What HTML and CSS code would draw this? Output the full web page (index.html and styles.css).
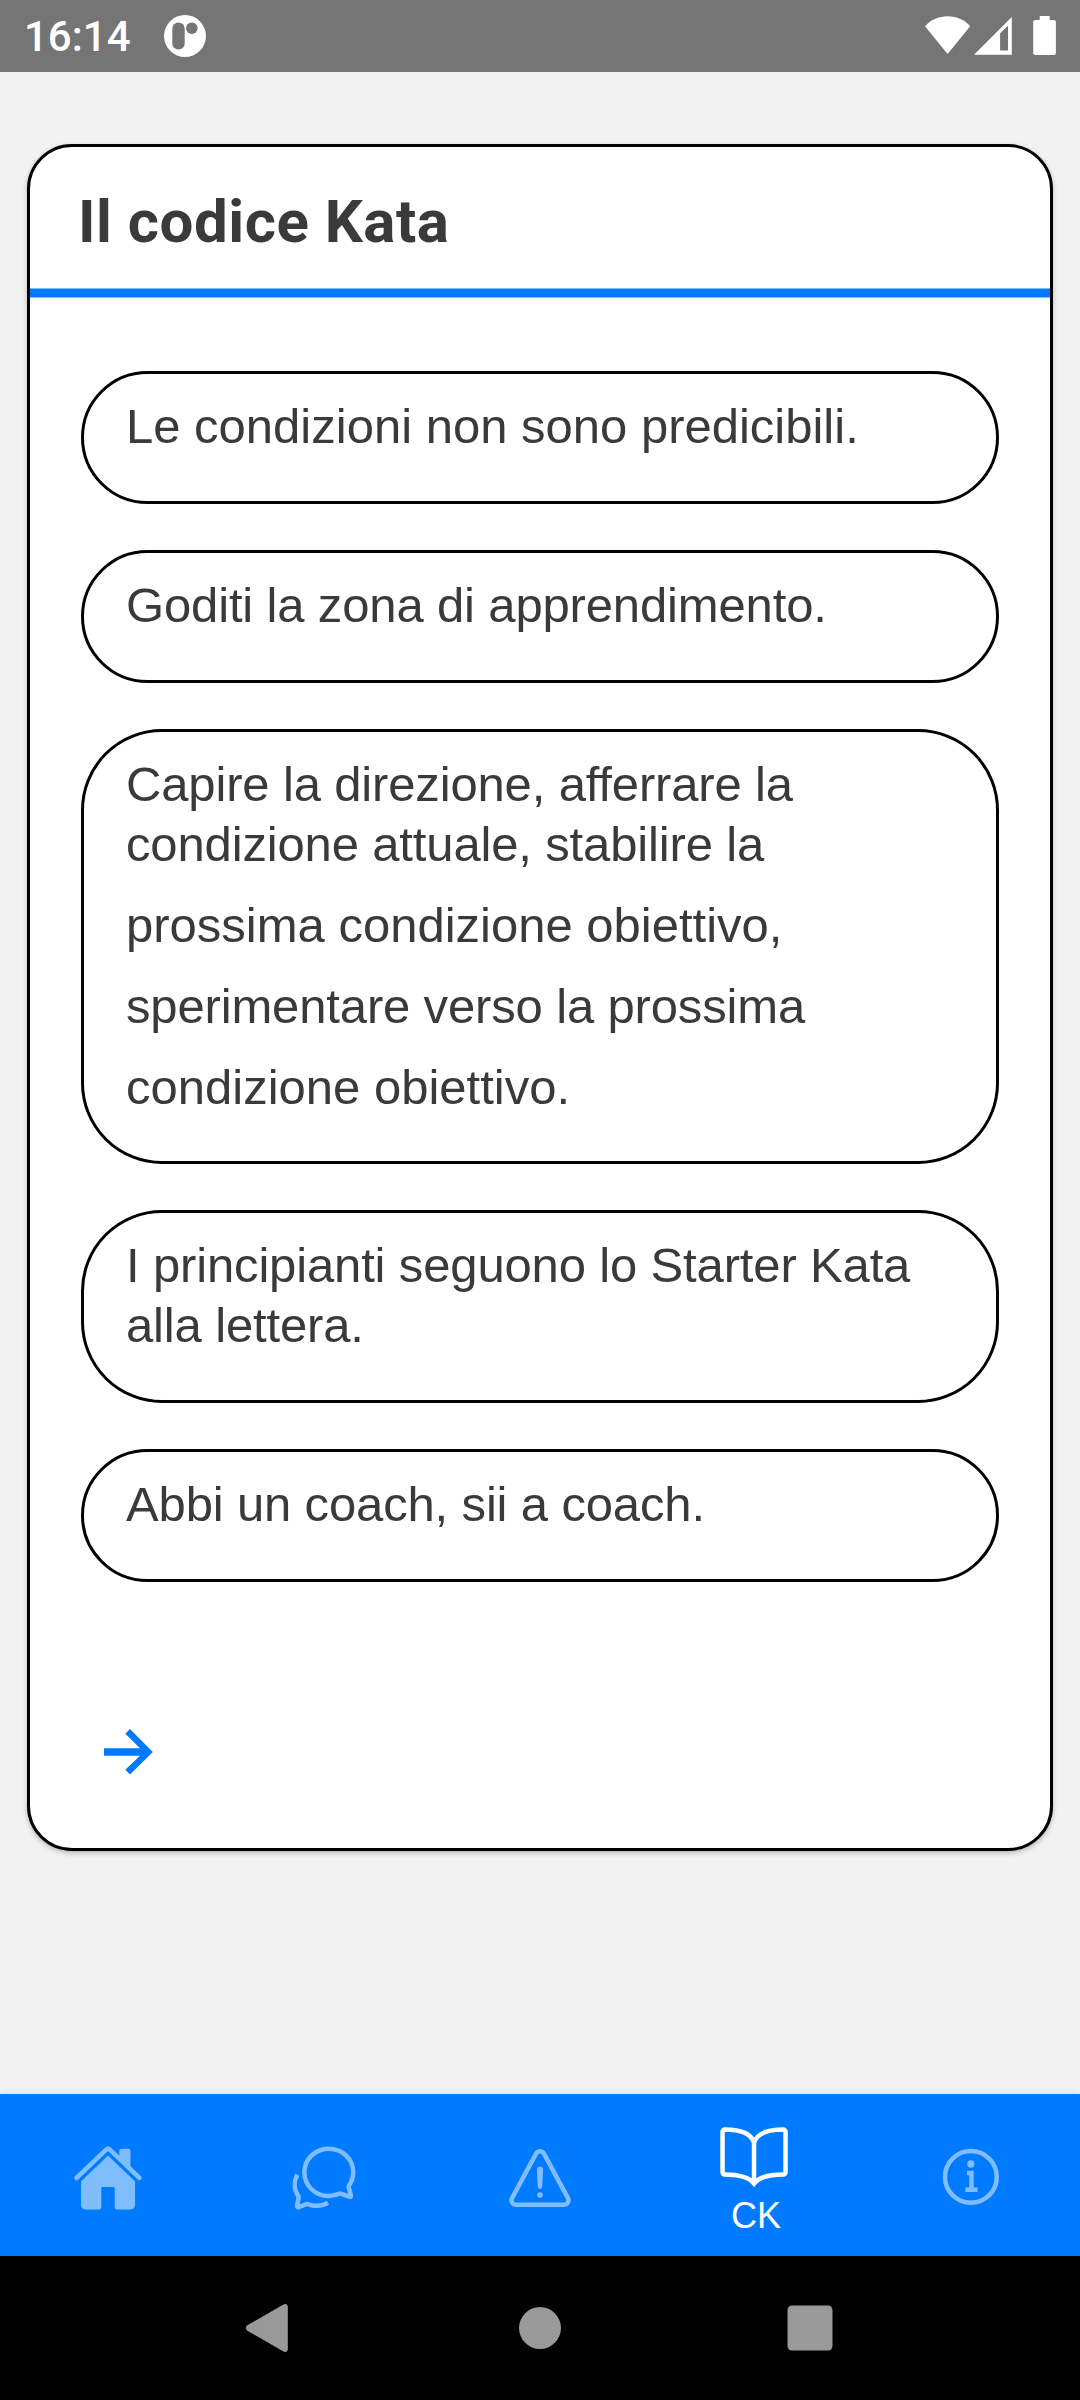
FILE: index.html
```html
<!DOCTYPE html>
<html lang="it">
<head>
  <meta charset="utf-8">
  <title>Il codice Kata</title>
  <link rel="stylesheet" href="styles.css">
</head>
<body>
  <header class="status">
    <span class="status__time">16:14</span>
    <svg class="status__app" width="42" height="42" viewBox="0 0 42 42">
      <circle cx="21" cy="21" r="21" fill="#fff"/>
      <rect x="8.3" y="7.4" width="12.4" height="27.2" rx="6.2" fill="#757575"/>
      <circle cx="27.8" cy="13.2" r="5.8" fill="#757575"/>
    </svg>
    <svg class="status__system" width="132" height="40" viewBox="0 0 132 40">
      <path fill="#fff" d="M23.6 38 1 10.3C6.500 4 14.500.3 23.600.3S40.700 4 46.200 10.300z"/>
      <path fill="#fff" fill-rule="evenodd" d="M50 38.700 87.800 1v37.700zM76.100 17.300V34.500H84V9.700z"/>
      <path fill="#fff" d="M115.700 0h10v4h4.200a2 2 0 0 1 2 2v31a2 2 0 0 1-2 2h-18.700a2 2 0 0 1-2-2V6a2 2 0 0 1 2-2h4.500z"/>
    </svg>
  </header>

  <main class="screen">
    <section class="card">
      <h1 class="card__title">Il codice Kata</h1>
      <ul class="rules">
        <li class="rule">Le condizioni non sono predicibili.</li>
        <li class="rule snug">Goditi la zona di apprendimento.</li>
        <li class="rule snug">Capire la direzione, afferrare la<br>condizione attuale, stabilire la
          <p class="rule__more">prossima condizione obiettivo,<br><span class="snug">sperimentare verso la prossima</span><br>condizione obiettivo.</p>
        </li>
        <li class="rule snug">I principianti seguono lo Starter Kata<br>alla lettera.</li>
        <li class="rule snug">Abbi un coach, sii a coach.</li>
      </ul>
      <svg class="card__next" width="49" height="46" viewBox="0 0 49 46">
        <path fill="#007aff" d="M0 19.300h36L21.300 4.700 26 0l22.800 23L26 45.500l-4.700-4.700L36 26.700H0z"/>
      </svg>
    </section>
  </main>

  <nav class="tabs">
    <a class="tab">
      <svg class="icon" viewBox="0 0 512 512">
        <path class="solid" d="M261.560 101.280a8 8 0 0 0-11.060 0L66.400 277.150a8 8 0 0 0-2.470 5.790L63.900 448a32 32 0 0 0 32 32H192a16 16 0 0 0 16-16V328a8 8 0 0 1 8-8h80a8 8 0 0 1 8 8v136a16 16 0 0 0 16 16h96.060a32 32 0 0 0 32-32V282.940a8 8 0 0 0-2.470-5.790z"/>
        <path class="solid" d="M490.910 244.150l-74.800-71.560V64a16 16 0 0 0-16-16h-48a16 16 0 0 0-16 16v32l-57.920-55.380C272.770 35.140 264.710 32 256 32c-8.680 0-16.720 3.140-22.140 8.630l-212.700 203.500c-6.220 6-7 15.870-1.340 22.370A16 16 0 0 0 43 267.560L250.500 69.280a8 8 0 0 1 11.060 0l207.520 198.280a16 16 0 0 0 22.590-.44c6.140-6.360 5.630-16.860-.76-22.970z"/>
      </svg>
    </a>
    <a class="tab">
      <svg class="icon" viewBox="0 0 512 512">
        <path class="line" d="M431 320.600c-1-3.600 1.200-8.600 3.300-12.200a33.680 33.680 0 0 1 2.100-3.100A162 162 0 0 0 464 215c.3-92.200-77.500-167-173.700-167-83.900 0-153.900 57.100-170.300 132.900a160.700 160.700 0 0 0-3.700 34.200c0 92.300 74.800 169.100 171 169.100 15.300 0 35.900-4.600 47.200-7.700s22.500-7.200 25.400-8.300a26.440 26.440 0 0 1 9.300-1.700 26 26 0 0 1 10.100 2l56.700 20.100a13.520 13.520 0 0 0 3.900 1 8 8 0 0 0 8-8 12.850 12.850 0 0 0-.5-2.700z"/>
        <path class="line" d="M66.460 232a146.230 146.230 0 0 0 6.390 152.670c2.310 3.490 3.610 6.190 3.210 8s-11.930 61.870-11.930 61.870a8 8 0 0 0 2.710 7.680A8.170 8.170 0 0 0 72 464a7.260 7.260 0 0 0 2.910-.6l56.210-22a15.700 15.700 0 0 1 12 .2c18.940 7.380 39.880 12 60.830 12A159.210 159.210 0 0 0 284 432.110"/>
      </svg>
    </a>
    <a class="tab">
      <svg class="icon" viewBox="0 0 512 512">
        <path class="line" d="M85.570 446.250h340.860a32 32 0 0 0 28.170-47.170L284.180 82.580c-12.090-22.440-44.270-22.440-56.360 0L57.400 399.080a32 32 0 0 0 28.170 47.170z"/>
        <path class="line" d="M250.260 195.390l5.740 122 5.730-121.950a5.740 5.740 0 0 0-5.790-6 5.740 5.740 0 0 0-5.680 5.950z"/>
        <circle class="solid" cx="256" cy="377.250" r="20"/>
      </svg>
    </a>
    <a class="tab tab--active">
      <svg class="icon" viewBox="14 -4 512 512">
        <path class="line line--sharp" d="M256 160c16-63.160 76.430-95.410 208-96a15.940 15.940 0 0 1 16 16v288a16 16 0 0 1-16 16c-128 0-177.450 25.810-208 64-30.370-38-80-64-208-64-9.880 0-16-8.050-16-17.930V80a15.940 15.940 0 0 1 16-16c131.570.59 192 32.840 208 96zM256 160v288"/>
      </svg>
      <span class="tab__label">CK</span>
    </a>
    <a class="tab">
      <svg class="icon" viewBox="0 0 512 512">
        <circle class="line" cx="248" cy="248" r="184"/>
        <path class="line line--sharp" d="M220 220h32v116M208 340h88"/>
        <circle class="solid" cx="248" cy="156" r="26"/>
      </svg>
    </a>
  </nav>

  <footer class="system">
    <svg width="46" height="48" viewBox="1 0 46 48">
      <path fill="#999" d="M1 21.500 37.500.6Q41-1 41.800 2.500v43Q41 49 37.500 47.400L1 26.500Q-1.400 24 1 21.500z"/>
    </svg>
    <svg width="42" height="42" viewBox="0 0 42 42"><circle cx="21" cy="21" r="21" fill="#999"/></svg>
    <svg width="46" height="46" viewBox="0 0 46 46"><rect x=".5" y=".5" width="45" height="45" rx="4.500" fill="#999"/></svg>
  </footer>
</body>
</html>
```

FILE: styles.css
```css
* {
  box-sizing: border-box;
}

body {
  display: flex;
  flex-direction: column;
  width: 1080px;
  height: 2400px;
  margin: 0;
  background: #f2f2f2;
  color: #3a3a3c;
  font-family: "Liberation Sans", Arial, sans-serif;
}

svg {
  display: block;
  overflow: visible;
}

.status {
  display: flex;
  align-items: flex-start;
  height: 72px;
  padding: 0 24px;
  background: #757575;
  color: #fff;
}

.status__time {
  width: 140px;
  padding-top: 12px;
  font: 500 42px/50px Roboto, sans-serif;
}

.status__app {
  margin-top: 15px;
}

.status__system {
  margin: 16px 0 0 auto;
}

.screen {
  flex: 1;
  padding: 72px 27px 0;
}

.card {
  height: 1707px;
  border: 3px solid #000;
  border-radius: 45px;
  background: #fff;
  box-shadow: 0 2px 5px rgba(0, 0, 0, 0.25);
}

.card__title {
  height: 150px;
  margin: 0;
  padding: 40px 48px 0;
  border-bottom: 8px solid #007aff;
  box-shadow: 0 1px #80bdff, inset 0 -1px #80bdff;
  font: 700 60px/70px Roboto, sans-serif;
  letter-spacing: 0.5px;
}

.rules {
  display: flex;
  flex-direction: column;
  gap: 46px;
  margin: 0;
  padding: 74px 51px 0;
  list-style: none;
}

.rule {
  padding: 22px 42px 45px;
  border: 3px solid #000;
  border-radius: 81px;
  font-size: 49px;
  line-height: 60px;
  white-space: nowrap;
}

.rule__more {
  margin: 11px 0 -12px;
  letter-spacing: normal;
  line-height: 81px;
}

.snug {
  letter-spacing: -0.15px;
}

.card__next {
  margin: 147px 0 0 74px;
}

.tabs {
  display: grid;
  grid-template-columns: repeat(5, 1fr);
  height: 162px;
  background: #007aff;
  box-shadow: 0 -2px 8px rgba(0, 0, 0, 0.06);
  color: #80bdff;
}

.tab {
  display: flex;
  flex-direction: column;
  align-items: center;
  padding-top: 48px;
}

.tab--active {
  padding-top: 26px;
  color: #fff;
}

.tab__label {
  margin-top: 3px;
  font-size: 36px;
  line-height: 42px;
}

.icon {
  width: 72px;
  height: 72px;
}

.solid {
  fill: currentColor;
}

.line {
  fill: none;
  stroke: currentColor;
  stroke-width: 32;
  stroke-linejoin: round;
}

.line--sharp {
  stroke-linejoin: miter;
}

.system {
  display: grid;
  grid-template-columns: repeat(3, 270px);
  justify-content: center;
  place-items: center;
  height: 144px;
  background: #000;
}
```
